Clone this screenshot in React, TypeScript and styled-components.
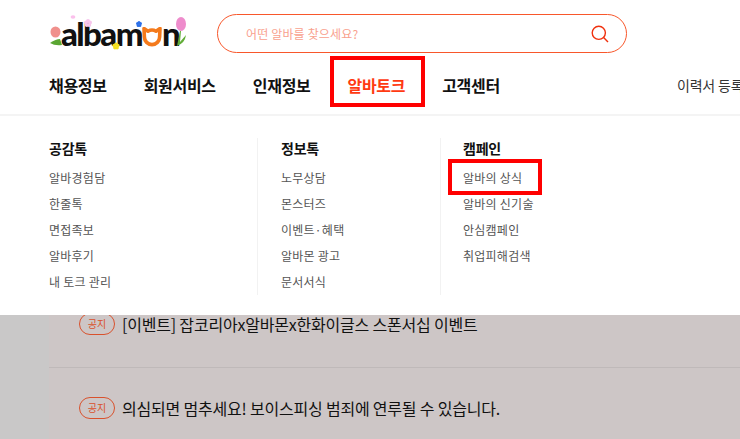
import React from "react";
import styled, { createGlobalStyle } from "styled-components";

const GlobalStyle = createGlobalStyle`
  html, body {
    margin: 0;
    padding: 0;
    height: 100%;
    overflow: hidden;
    background: #c9c8c8;
  }
  *, *::before, *::after { box-sizing: border-box; }
  ul { list-style: none; margin: 0; padding: 0; }
`;

const font = `"Noto Sans CJK KR", "Noto Sans", sans-serif`;

const menus = [
  { title: "공감톡", items: ["알바경험담", "한줄톡", "면접족보", "알바후기", "내 토크 관리"] },
  { title: "정보톡", items: ["노무상담", "몬스터즈", "이벤트·혜택", "알바몬 광고", "문서서식"] },
  { title: "캠페인", items: ["알바의 상식", "알바의 신기술", "안심캠페인", "취업피해검색"], marked: "알바의 상식" },
];

const navItems = ["채용정보", "회원서비스", "인재정보", "알바토크", "고객센터"];

const Blossom = ({ x, y, r, fill }: { x: number; y: number; r: number; fill: string }) => (
  <g fill={fill}>
    <circle cx={x - r} cy={y - r * 0.3} r={r} />
    <circle cx={x + r} cy={y - r * 0.3} r={r} />
    <circle cx={x} cy={y - r} r={r} />
    <circle cx={x - r * 0.6} cy={y + r} r={r} />
    <circle cx={x + r * 0.6} cy={y + r} r={r} />
  </g>
);

const Logo = () => (
  <LogoBox>
    <LogoText>alba</LogoText>
    <LogoText>m</LogoText>
    <CatO width="20" height="20" viewBox="0 0 20 20">
      <path d="M2 1.5 L2.4 10 A7.6 7.6 0 1 0 17.6 10 L18 1.5 L14 4.2 A7.8 7.8 0 0 0 6 4.2 Z" fill="none" stroke="#f47a1c" strokeWidth="3.6" strokeLinejoin="round" />
    </CatO>
    <LogoText>n</LogoText>
    <LogoArt width="150" height="50" viewBox="0 0 150 50">
      <ellipse cx="6.5" cy="18" rx="5" ry="5.5" fill="#f0908c" />
      <path d="M1 29 Q7 25 11 25 L13 31 Q6 32 1 29Z" fill="#5aa632" />
      <ellipse cx="24" cy="3" rx="2.4" ry="1.7" fill="#fbc0ec" />
      <Blossom x={39} y={9} r={2} fill="#f6c6ec" />
      <Blossom x={67} y={32} r={1.8} fill="#f5e020" />
      <Blossom x={90} y={10} r={1.5} fill="#2d70e8" />
      <ellipse cx="132" cy="10" rx="5" ry="7" fill="#ee8ccc" />
      <path d="M128 32 L131 17 L132 17 L131 28 L137 21 Q136 29 128 32Z" fill="#62ad38" />
    </LogoArt>
  </LogoBox>
);

const SearchIcon = () => (
  <svg width="20" height="20" viewBox="0 0 20 20" fill="none" stroke="#f0310e" strokeWidth="1.4">
    <circle cx="8.8" cy="8.8" r="6.6" />
    <path d="M13.6 13.6 L18 18" />
  </svg>
);

export default function App() {
  return (
    <>
      <GlobalStyle />
      <Page>
        <Header>
          <TopRow>
            <Logo />
            <SearchBox>
              <Placeholder>어떤 알바를 찾으세요?</Placeholder>
              <SearchIcon />
            </SearchBox>
          </TopRow>
          <NavRow>
            <NavList>
              {navItems.map((name) => (
                <NavItem key={name} $active={name === "알바토크"}>
                  {name}
                </NavItem>
              ))}
            </NavList>
            <ResumeLink>이력서 등록</ResumeLink>
          </NavRow>
        </Header>
        <MegaMenu>
          {menus.map((menu) => (
            <MenuColumn key={menu.title}>
              <MenuTitle>{menu.title}</MenuTitle>
              <ul>
                {menu.items.map((item) => (
                  <MenuLink key={item} $marked={item === menu.marked}>
                    {item}
                  </MenuLink>
                ))}
              </ul>
            </MenuColumn>
          ))}
        </MegaMenu>
        <Content>
          <NoticeRow>
            <NoticeBadge>공지</NoticeBadge>
            <NoticeTitle>[이벤트] 잡코리아x알바몬x한화이글스 스폰서십 이벤트</NoticeTitle>
          </NoticeRow>
          <NoticeRow>
            <NoticeBadge>공지</NoticeBadge>
            <NoticeTitle>의심되면 멈추세요! 보이스피싱 범죄에 연루될 수 있습니다.</NoticeTitle>
          </NoticeRow>
        </Content>
      </Page>
    </>
  );
}

const Page = styled.div`
  position: relative;
  width: 740px;
  height: 439px;
  overflow: hidden;
  font-family: ${font};
`;

const Header = styled.header`
  height: 116px;
  background: #fff;
  padding-left: 49px;
  border-bottom: 2px solid #f4f4f4;
`;

const TopRow = styled.div`
  display: flex;
  align-items: flex-start;
  height: 56px;
  padding-top: 14px;
`;

const LogoBox = styled.div`
  position: relative;
  display: flex;
  align-items: baseline;
  width: 168px;
  height: 39px;
  padding-left: 12px;
  flex-shrink: 0;
`;

const LogoText = styled.span`
  font-family: "Lato", sans-serif;
  font-weight: 900;
  font-size: 33px;
  line-height: 39px;
  letter-spacing: -1.6px;
  color: #111;
`;

const CatO = styled.svg`
  align-self: flex-end;
  flex-shrink: 0;
  margin: 0 0 6px 0;
`;

const LogoArt = styled.svg`
  position: absolute;
  left: 0;
  top: 0;
  pointer-events: none;
`;

const SearchBox = styled.div`
  display: flex;
  align-items: center;
  justify-content: space-between;
  width: 410px;
  height: 39px;
  padding: 0 16px 0 28px;
  border: 1px solid #f8572b;
  border-radius: 20px;
`;

const Placeholder = styled.span`
  font-size: 12px;
  letter-spacing: 0.15px;
  color: #f9a18e;
`;

const NavRow = styled.nav`
  display: flex;
  align-items: center;
  justify-content: space-between;
  height: 58px;
`;

const NavList = styled.ul`
  display: flex;
  align-items: center;
  gap: 37px;
`;

const NavItem = styled.li<{ $active?: boolean }>`
  position: relative;
  font-size: 16px;
  font-weight: 700;
  line-height: 24px;
  letter-spacing: -0.3px;
  color: ${(p) => (p.$active ? "#ff3a12" : "#111")};

  ${(p) =>
    p.$active &&
    `
    &::after {
      content: "";
      position: absolute;
      left: -17px;
      right: -20px;
      top: -17px;
      bottom: -10px;
      border: 4px solid #ff0000;
    }
  `}
`;

const ResumeLink = styled.a`
  flex-shrink: 0;
  width: 63px;
  white-space: nowrap;
  font-size: 14px;
  letter-spacing: -0.2px;
  color: #333;
`;

const MegaMenu = styled.div`
  position: absolute;
  top: 116px;
  left: 0;
  right: 0;
  height: 199px;
  display: grid;
  grid-template-columns: 208px 183px 1fr;
  padding: 22px 0 23px 49px;
  background: #fff;
`;

const MenuColumn = styled.div`
  padding-left: 23px;
  border-left: 1px solid #f2f2f2;

  &:first-child {
    padding-left: 0;
    border-left: 0;
  }

  &:last-child {
    padding-left: 22px;
  }
`;

const MenuTitle = styled.h3`
  margin: 0 0 7px;
  font-size: 14px;
  font-weight: 700;
  line-height: 20px;
  letter-spacing: -0.2px;
  color: #111;
`;

const MenuLink = styled.li<{ $marked?: boolean }>`
  position: relative;
  height: 26px;
  font-size: 12px;
  line-height: 26px;
  letter-spacing: 0.25px;
  color: #555;

  ${(p) =>
    p.$marked &&
    `
    &::after {
      content: "";
      position: absolute;
      left: -15px;
      top: -6px;
      width: 94px;
      height: 36px;
      border: 4px solid #ff0000;
    }
  `}
`;

const Content = styled.main`
  margin-left: 49px;
  padding-top: 168px;
  height: 323px;
  background: #cdc6c6;
`;

const NoticeRow = styled.div`
  display: flex;
  align-items: center;
  gap: 7px;
  height: 84px;
  padding: 0 0 4px 30px;
  border-bottom: 1px solid #bfb9b9;
`;

const NoticeBadge = styled.span`
  display: flex;
  align-items: center;
  justify-content: center;
  width: 36px;
  height: 22px;
  border: 1px solid #d9512c;
  border-radius: 11px;
  font-size: 10px;
  color: #d9512c;
`;

const NoticeTitle = styled.span`
  font-size: 16px;
  letter-spacing: -0.2px;
  color: #111;
  white-space: nowrap;
`;
